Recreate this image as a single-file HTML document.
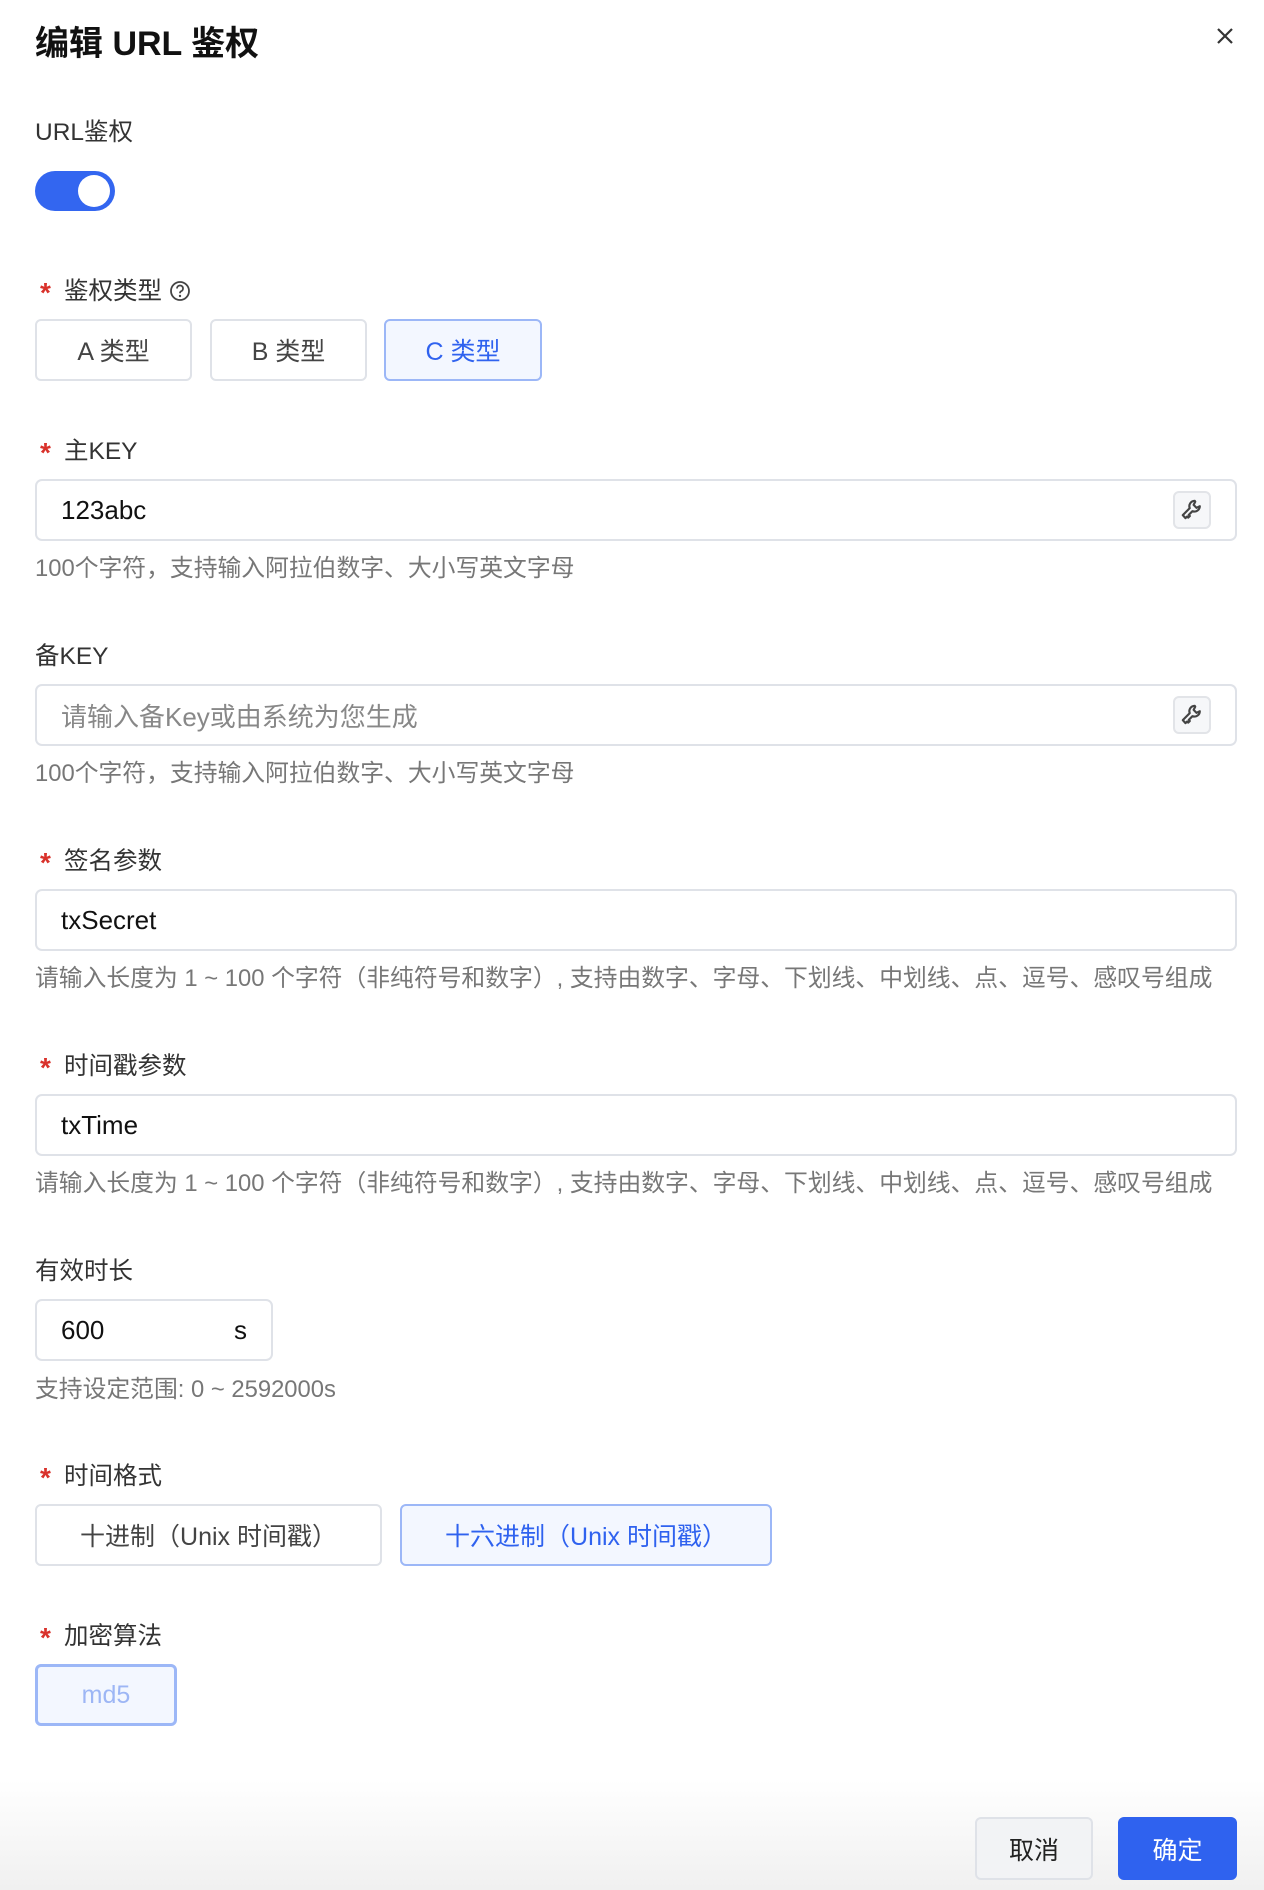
<!DOCTYPE html>
<html><head><meta charset="utf-8"><style>
*{box-sizing:border-box;margin:0;padding:0}
body{width:1264px;height:1890px;background:#fff;font-family:"Liberation Sans","Noto Sans CJK SC",sans-serif;color:#222;position:relative;overflow:hidden}
.a{position:absolute}
.title{left:35px;top:16px;font-size:34px;font-weight:bold;color:#111}
.lbl{font-size:24.5px;color:#333;left:35px;line-height:30px;margin-top:3px}
.star{color:#d9322b;display:inline-block;width:29px;padding-left:5px;font-size:28px;font-weight:bold;vertical-align:-3px}
.btn{border:2px solid #dfe2e8;border-radius:6px;background:#fff;font-size:25px;color:#444;display:flex;align-items:center;justify-content:center}
.sel{border-color:#9cb7f7;background:#f3f7ff;color:#2f62ef}
.inp{left:35px;width:1202px;height:62px;border:2px solid #dfe2e8;border-radius:7px;font-size:26px;color:#111;padding-left:24px;display:flex;align-items:center}
.ph{color:#888}
.help{left:35px;font-size:23.8px;color:#777;line-height:28px;white-space:nowrap;margin-top:2px}
.key{position:absolute;right:24px;top:10px;width:38px;height:38px;border:2px solid #e2e4e8;border-radius:6px;background:#f6f7f9;display:flex;align-items:center;justify-content:center}
</style></head><body>
<div class="a title">编辑 URL 鉴权</div>
<svg class="a" style="left:1215px;top:26px" width="20" height="20" viewBox="0 0 20 20"><path d="M3 3L17 17M17 3L3 17" stroke="#333" stroke-width="2.2"/></svg>

<div class="a lbl" style="top:115px">URL鉴权</div>
<div class="a" style="left:35px;top:171px;width:80px;height:40px;border-radius:20px;background:#3366f0"><div style="position:absolute;right:5px;top:4px;width:32px;height:32px;border-radius:50%;background:#fff"></div></div>

<div class="a lbl" style="top:274px;left:35px"><span class="star">*</span>鉴权类型 <svg width="22" height="22" viewBox="0 0 22 22" style="vertical-align:-3px"><circle cx="11" cy="11" r="9" fill="none" stroke="#444" stroke-width="1.8"/><path d="M8 8.5a3 3 0 1 1 4 2.8c-.8.4-1 1-1 2" fill="none" stroke="#444" stroke-width="1.8"/><circle cx="11" cy="16" r="1.2" fill="#444"/></svg></div>
<div class="a btn" style="left:35px;top:319px;width:157px;height:62px">A 类型</div>
<div class="a btn" style="left:210px;top:319px;width:157px;height:62px">B 类型</div>
<div class="a btn sel" style="left:384px;top:319px;width:158px;height:62px">C 类型</div>

<div class="a lbl" style="top:434px"><span class="star">*</span>主KEY</div>
<div class="a inp" style="top:479px">123abc<div class="key"><svg width="26" height="26" viewBox="0 0 24 24"><path d="M14.5 3.5a5 5 0 0 0-4.6 6.8L3.5 16.7 6 19.5l1.5-1.5 1 1 1.5-1.5-1-1 3.4-3.4a5 5 0 0 0 6.8-4.6l-3 1.5-2.7-2.7 1.5-3z" fill="none" stroke="#444" stroke-width="2" stroke-linejoin="round"/></svg></div></div>
<div class="a help" style="top:553px">100个字符，支持输入阿拉伯数字、大小写英文字母</div>

<div class="a lbl" style="top:639px">备KEY</div>
<div class="a inp ph" style="top:684px">请输入备Key或由系统为您生成<div class="key"><svg width="26" height="26" viewBox="0 0 24 24"><path d="M14.5 3.5a5 5 0 0 0-4.6 6.8L3.5 16.7 6 19.5l1.5-1.5 1 1 1.5-1.5-1-1 3.4-3.4a5 5 0 0 0 6.8-4.6l-3 1.5-2.7-2.7 1.5-3z" fill="none" stroke="#444" stroke-width="2" stroke-linejoin="round"/></svg></div></div>
<div class="a help" style="top:758px">100个字符，支持输入阿拉伯数字、大小写英文字母</div>

<div class="a lbl" style="top:844px"><span class="star">*</span>签名参数</div>
<div class="a inp" style="top:889px">txSecret</div>
<div class="a help" style="top:963px">请输入长度为 1 ~ 100 个字符（非纯符号和数字）, 支持由数字、字母、下划线、中划线、点、逗号、感叹号组成</div>

<div class="a lbl" style="top:1049px"><span class="star">*</span>时间戳参数</div>
<div class="a inp" style="top:1094px">txTime</div>
<div class="a help" style="top:1168px">请输入长度为 1 ~ 100 个字符（非纯符号和数字）, 支持由数字、字母、下划线、中划线、点、逗号、感叹号组成</div>

<div class="a lbl" style="top:1254px">有效时长</div>
<div class="a inp" style="top:1299px;width:238px">600<span style="position:absolute;right:24px">s</span></div>
<div class="a help" style="top:1374px">支持设定范围: 0 ~ 2592000s</div>

<div class="a lbl" style="top:1459px"><span class="star">*</span>时间格式</div>
<div class="a btn" style="left:35px;top:1504px;width:347px;height:62px">十进制（Unix 时间戳）</div>
<div class="a btn sel" style="left:400px;top:1504px;width:372px;height:62px">十六进制（Unix 时间戳）</div>

<div class="a lbl" style="top:1619px"><span class="star">*</span>加密算法</div>
<div class="a btn sel" style="left:35px;top:1664px;width:142px;height:62px;color:#9db6f5;border-width:3px">md5</div>

<div class="a" style="left:0;top:1780px;width:1264px;height:110px;background:linear-gradient(#fff,#f0f0f0)"></div>
<div class="a btn" style="left:975px;top:1817px;width:118px;height:63px;background:#f2f3f5;color:#222">取消</div>
<div class="a btn" style="left:1118px;top:1817px;width:119px;height:63px;background:#2f62ef;border-color:#2f62ef;color:#fff">确定</div>
</body></html>
